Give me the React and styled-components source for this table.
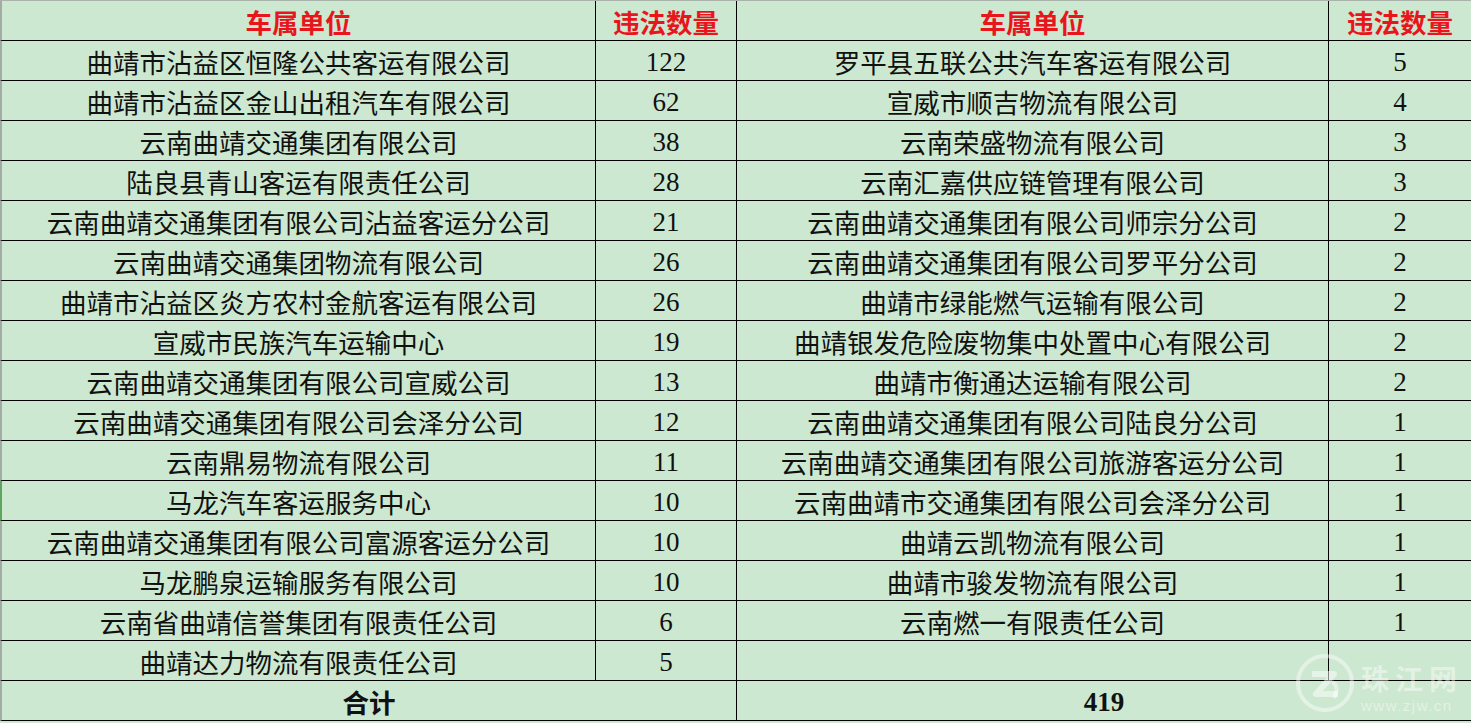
import React from 'react';
import styled, { createGlobalStyle } from 'styled-components';

const GlobalStyle = createGlobalStyle`
  html, body {
    margin: 0;
    padding: 0;
    background: #cde8d0;
  }
  body {
    font-family: 'Liberation Serif', 'Noto Sans CJK SC', serif;
  }
`;

const left = [
  ['曲靖市沾益区恒隆公共客运有限公司', 122],
  ['曲靖市沾益区金山出租汽车有限公司', 62],
  ['云南曲靖交通集团有限公司', 38],
  ['陆良县青山客运有限责任公司', 28],
  ['云南曲靖交通集团有限公司沾益客运分公司', 21],
  ['云南曲靖交通集团物流有限公司', 26],
  ['曲靖市沾益区炎方农村金航客运有限公司', 26],
  ['宣威市民族汽车运输中心', 19],
  ['云南曲靖交通集团有限公司宣威公司', 13],
  ['云南曲靖交通集团有限公司会泽分公司', 12],
  ['云南鼎易物流有限公司', 11],
  ['马龙汽车客运服务中心', 10],
  ['云南曲靖交通集团有限公司富源客运分公司', 10],
  ['马龙鹏泉运输服务有限公司', 10],
  ['云南省曲靖信誉集团有限责任公司', 6],
  ['曲靖达力物流有限责任公司', 5],
];

const right = [
  ['罗平县五联公共汽车客运有限公司', 5],
  ['宣威市顺吉物流有限公司', 4],
  ['云南荣盛物流有限公司', 3],
  ['云南汇嘉供应链管理有限公司', 3],
  ['云南曲靖交通集团有限公司师宗分公司', 2],
  ['云南曲靖交通集团有限公司罗平分公司', 2],
  ['曲靖市绿能燃气运输有限公司', 2],
  ['曲靖银发危险废物集中处置中心有限公司', 2],
  ['曲靖市衡通达运输有限公司', 2],
  ['云南曲靖交通集团有限公司陆良分公司', 1],
  ['云南曲靖交通集团有限公司旅游客运分公司', 1],
  ['云南曲靖市交通集团有限公司会泽分公司', 1],
  ['曲靖云凯物流有限公司', 1],
  ['曲靖市骏发物流有限公司', 1],
  ['云南燃一有限责任公司', 1],
  ['', ''],
];

const Sheet = styled.div`
  position: relative;
  width: 1471px;
  height: 723px;
  overflow: hidden;
  border-top: 1px solid #a9b3aa;
  box-sizing: border-box;
  display: grid;
  grid-template-columns: 596px 141px 592px 142px;
  grid-template-rows: 40px repeat(17, 40px);
  background: #cde8d0;
`;

const Cell = styled.div`
  grid-column: span ${p => p.$span || 1};
  display: flex;
  align-items: center;
  justify-content: center;
  padding-top: 3px;
  box-sizing: border-box;
  border-bottom: 1px solid #000;
  border-right: ${p => (p.$last ? 'none' : '1px solid #000')};
  border-left: ${p => (p.$first ? `2px solid ${p.$marked ? '#5ea65e' : '#a4aaa5'}` : 'none')};
  color: ${p => (p.$head ? '#e8161c' : '#111')};
  font-family: ${p =>
    p.$num
      ? "'Liberation Serif', 'Times New Roman', serif"
      : "'Noto Sans CJK SC', 'Noto Sans', sans-serif"};
  font-size: ${p => (p.$num ? '27px' : '26.5px')};
  font-weight: ${p => (p.$head || p.$bold ? 700 : 400)};
  line-height: 1;
  white-space: nowrap;
`;

const Watermark = styled.div`
  position: absolute;
  left: 1294px;
  top: 651px;
  display: flex;
  align-items: flex-start;
  gap: 5px;
  color: rgba(255, 255, 255, 0.45);
  pointer-events: none;
`;

const MarkText = styled.div`
  display: flex;
  flex-direction: column;
  align-items: flex-start;
  gap: 6px;
  margin-top: 12px;
`;

const MarkName = styled.span`
  font-family: 'Noto Sans CJK SC', sans-serif;
  font-weight: 700;
  font-size: 28px;
  letter-spacing: 6px;
  line-height: 28px;
  height: 28px;
`;

const MarkSite = styled.span`
  font-family: 'Liberation Sans', Arial, sans-serif;
  font-size: 15px;
  letter-spacing: 1.5px;
  line-height: 15px;
  height: 15px;
`;

const Logo = () => (
  <svg width="62" height="62" viewBox="0 0 62 62">
    <circle cx="31" cy="31" r="27" fill="none" stroke="rgba(255,255,255,0.45)" strokeWidth="4" />
    <path
      d="M18 22 L40 22 L22 42 L44 42"
      fill="none"
      stroke="rgba(255,255,255,0.5)"
      strokeWidth="6"
      strokeLinejoin="round"
    />
    <path d="M38 30 Q46 34 40 46" fill="none" stroke="rgba(255,255,255,0.45)" strokeWidth="4" />
  </svg>
);

export default function App() {
  return (
    <>
      <GlobalStyle />
      <Sheet>
        <Cell $head $first>车属单位</Cell>
        <Cell $head>违法数量</Cell>
        <Cell $head>车属单位</Cell>
        <Cell $head $last>违法数量</Cell>
        {left.map(([name, count], i) => (
          <React.Fragment key={i}>
            <Cell $first $marked={i === 11}>{name}</Cell>
            <Cell $num>{count}</Cell>
            <Cell>{right[i][0]}</Cell>
            <Cell $num $last>{right[i][1]}</Cell>
          </React.Fragment>
        ))}
        <Cell $span={2} $first $bold>合计</Cell>
        <Cell $span={2} $num $bold $last>419</Cell>
        <Watermark>
          <Logo />
          <MarkText>
            <MarkName>珠江网</MarkName>
            <MarkSite>www.zjw.cn</MarkSite>
          </MarkText>
        </Watermark>
      </Sheet>
    </>
  );
}
